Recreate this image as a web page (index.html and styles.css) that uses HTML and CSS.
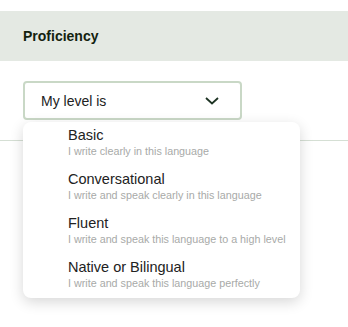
FILE: index.html
```html
<!DOCTYPE html>
<html>
<head>
  <title>Proficiency</title>
  <link rel="stylesheet" href="styles.css">
</head>
<body>
  <div class="page">
    <div class="section-head">
      <h3>Proficiency</h3>
    </div>

    <div class="section-body">
      <div class="picker">
        <button class="select">
          <span>My level is</span>
          <svg width="14" height="8" viewBox="0 0 14 8" fill="none">
            <path d="M1 1L7 6.5L13 1" stroke="#1d3323" stroke-width="1.8"/>
          </svg>
        </button>

        <ul class="menu">
          <li>
            <div class="title">Basic</div>
            <div class="desc">I write clearly in this language</div>
          </li>
          <li>
            <div class="title">Conversational</div>
            <div class="desc">I write and speak clearly in this language</div>
          </li>
          <li>
            <div class="title">Fluent</div>
            <div class="desc">I write and speak this language to a high level</div>
          </li>
          <li>
            <div class="title">Native or Bilingual</div>
            <div class="desc">I write and speak this language perfectly</div>
          </li>
        </ul>
      </div>
    </div>
  </div>
</body>
</html>
```

FILE: styles.css
```css
html, body {
  height: 100%;
}
body {
  margin: 0;
  font-family: "Liberation Sans", Arial, sans-serif;
  color: #1f241f;
  background: #fff;
}
.page {
  min-height: 100%;
  padding-top: 11px;
  box-sizing: border-box;
}
.section-head {
  height: 50px;
  background: #e4e9e3;
  display: flex;
  align-items: center;
  padding: 0 23px;
}
.section-head h3 {
  margin: 0;
  font-size: 14px;
  font-weight: bold;
  color: #13220f;
}
.section-body {
  padding: 20px 23px 20px;
  border-bottom: 1px solid #d5dfd4;
}
.picker {
  position: relative;
  width: 219px;
}
.select {
  width: 219px;
  height: 39px;
  display: flex;
  align-items: center;
  justify-content: space-between;
  padding: 0 21px 0 16px;
  background: #fff;
  border: 2px solid #c9d8c6;
  border-radius: 4px;
  font-family: inherit;
  font-size: 14px;
  color: #222;
  cursor: pointer;
}
.menu {
  position: absolute;
  z-index: 10;
  top: 41px;
  left: 0;
  width: 277px;
  margin: 0;
  padding: 3px 0 0 45px;
  box-sizing: border-box;
  list-style: none;
  background: #fff;
  border-radius: 8px;
  box-shadow: 0 4px 14px rgba(0, 0, 0, 0.16);
}
.menu li {
  height: 44px;
  padding-top: 1px;
  box-sizing: border-box;
}
.menu li:last-child {
  height: 41px;
}
.title {
  font-size: 14.5px;
  line-height: 18px;
  color: #222;
}
.desc {
  font-size: 10.75px;
  line-height: 14px;
  color: #a8aaa8;
}
```
